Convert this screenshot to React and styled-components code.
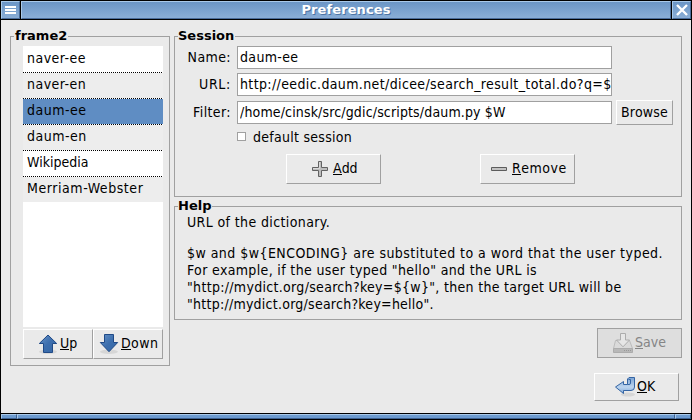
import React from 'react';
import styled, { createGlobalStyle } from 'styled-components';

const GlobalStyle = createGlobalStyle`
  *, *::before, *::after { box-sizing: border-box; }
  body { margin: 0; background: #eaeaea; }
`;

const Window = styled.div`
  width: 692px;
  height: 420px;
  display: flex;
  flex-direction: column;
  overflow: hidden;
  border: 1px solid #000;
  background: #eaeaea;
  color: #000;
  font: 14px/17px "DejaVu Sans Condensed", "DejaVu Sans", sans-serif;
  font-stretch: condensed;
  white-space: nowrap;
`;

const TitleBar = styled.header`
  display: grid;
  grid-template-columns: 19px 1fr 19px;
  column-gap: 1px;
  height: 19px;
  background: #000;
  border-bottom: 1px solid #000;
`;

const TitleCell = styled.div`
  display: flex;
  align-items: center;
  justify-content: center;
  border: 1px solid;
  border-color: #a9c9e9 #4a6c9a #4a6c9a #a9c9e9;
  background: linear-gradient(#6b96c6, #8aaed6);
`;

const Title = styled.h1`
  margin: 0;
  color: #fff;
  font: bold 13px/16px "DejaVu Sans", sans-serif;
  letter-spacing: 0.1px;
  text-shadow: 1px 1px 0 #4c74a4;
`;

const Body = styled.main`
  flex: 1;
  display: grid;
  grid-template-columns: 160px 508px;
  column-gap: 4px;
  align-items: start;
  padding: 16px 9px 0;
`;

const Column = styled.div`
  display: flex;
  flex-direction: column;
  gap: 9px;
`;

const Frame = styled.section`
  position: relative;
  height: ${(p) => p.$height}px;
  border: 1px solid #a0a0a0;
`;

const Legend = styled.h2`
  position: absolute;
  top: -9px;
  left: 3px;
  margin: 0;
  padding: 0 1px 0 ${(p) => p.$inset || 0}px;
  background: #eaeaea;
  font: bold 13px/16px "DejaVu Sans", sans-serif;
`;

const SideContent = styled.div`
  display: flex;
  flex-direction: column;
  padding: 9px 6px 0 12px;
`;

const List = styled.ul`
  height: 281px;
  margin: 0;
  padding: 0;
  list-style: none;
  background: #fff;
`;

const Item = styled.li`
  position: relative;
  height: 26px;
  padding: 4px 4px 0;
  letter-spacing: ${(p) => p.$tracking}px;
  background: ${(p) => (p.$selected ? '#5f8dc3' : p.$shaded ? '#ededed' : '#fff')};

  &:not(:first-child)::before {
    content: "";
    position: absolute;
    top: 0;
    left: 0;
    right: 0;
    height: 1px;
    background: repeating-linear-gradient(90deg, #000 0 1px, #fff 1px 2px);
  }
`;

const PairRow = styled.div`
  display: grid;
  grid-template-columns: 1fr 1fr;
  margin-top: 2px;
`;

const Button = styled.button`
  display: flex;
  align-items: center;
  justify-content: flex-start;
  width: ${(p) => (p.$width ? `${p.$width}px` : 'auto')};
  height: ${(p) => p.$height || 30}px;
  padding: 0 0 1px ${(p) => p.$start || 0}px;
  gap: ${(p) => p.$gap ?? 3}px;
  border: 1px solid;
  border-color: #ffffff #a0a0a0 #a0a0a0 #ffffff;
  background: #eaeaea;
  color: #000;
  font: inherit;
  letter-spacing: ${(p) => p.$tracking || 0}px;

  &:disabled {
    border-color: #a0a0a0;
    background: #dedede;
    color: #858585;
  }

  svg { flex: none; }
`;

const BrowseButton = styled(Button)`
  margin-left: -2px;
`;

const Mnemonic = styled.span`
  display: inline-block;
  border-bottom: 1px solid;
  line-height: 12px;
`;

const Form = styled.div`
  display: grid;
  grid-template-columns: 56px 375px 57px;
  grid-template-rows: 23px 23px 25px;
  column-gap: 6px;
  row-gap: 4px;
  align-items: center;
  padding-top: 9px;
`;

const FieldLabel = styled.label`
  grid-column: 1;
  text-align: right;
  letter-spacing: ${(p) => p.$tracking}px;
`;

const Field = styled.input`
  width: 100%;
  height: 23px;
  margin: 0;
  padding: 0 0 1px 2px;
  border: 1px solid #a0a0a0;
  border-radius: 0;
  outline: none;
  background: #fff;
  color: #000;
  font: inherit;
  letter-spacing: ${(p) => p.$tracking}px;
`;

const CheckRow = styled.label`
  display: flex;
  align-items: flex-end;
  gap: 7px;
  height: 17px;
  margin: 4px 0 0 62px;
  letter-spacing: 0.27px;
`;

const CheckBox = styled.span`
  width: 9px;
  height: 9px;
  margin-bottom: 5px;
  border: 1px solid #a0a0a0;
  background: #fff;
`;

const Actions = styled.div`
  display: flex;
  gap: 99px;
  margin: 8px 0 0 111px;
`;

const HelpText = styled.div`
  display: flex;
  flex-direction: column;
  gap: 14px;
  padding: 7px 0 0 12px;
`;

const HelpLine = styled.div`
  letter-spacing: ${(p) => p.$tracking}px;
`;

const Footer = styled.div`
  display: flex;
  flex-direction: column;
  align-items: flex-end;
  gap: 15px;
  margin-top: -1px;
`;

const ConfirmButton = styled(Button)`
  margin-right: 3px;
`;

const ResizeBar = styled.footer`
  display: grid;
  grid-template-columns: 16px 1fr 16px;
  height: 6px;
  border-top: 1px solid #000;
`;

const ResizeGrip = styled.div`
  border: 1px solid;
  border-color: #a9c9e9 #3c5f8e #3c5f8e #a9c9e9;
  background: #6d9bcf;
`;

const MenuIcon = () => (
  <svg width="11" height="8" shapeRendering="crispEdges" aria-hidden="true">
    <path d="M0 0h11v2H0zM0 3h11v2H0zM0 6h11v2H0z" fill="#fff" />
  </svg>
);

const CloseIcon = () => (
  <svg width="12" height="12" aria-hidden="true">
    <path d="M1 1l10 10M11 1L1 11" stroke="#fff" strokeWidth="2.4" />
  </svg>
);

const ArrowIcon = ({ down }) => (
  <svg width="20" height="21" viewBox="0 0 20 21" aria-hidden="true">
    <defs>
      <linearGradient id={down ? 'arrowDown' : 'arrowUp'} x2="1" y2="1">
        <stop offset="0" stopColor="#6792c7" />
        <stop offset="0.5" stopColor="#3d6fae" />
        <stop offset="1" stopColor="#3465a4" />
      </linearGradient>
    </defs>
    <ellipse cx="10" cy="18.800" rx="9" ry="2.200" fill="#d6d6d6" />
    <path
      d={down
        ? 'M5.500 1.500h9v8h4.200L10 18.700 1.300 9.500h4.200z'
        : 'M10 2l8.700 8.500h-4.200v9h-9v-9H1.300z'}
      fill={`url(#${down ? 'arrowDown' : 'arrowUp'})`}
      stroke="#204a87"
    />
  </svg>
);

const PlusIcon = () => (
  <svg width="16" height="17" viewBox="0 -1 16 17" aria-hidden="true">
    <path d="M6.500 .5h3v6h6v3h-6v6h-3v-6h-6v-3h6z" fill="#bdbdbd" stroke="#626262" />
    <path d="M7.500 1v6.500H1" fill="none" stroke="#dadada" />
  </svg>
);

const MinusIcon = () => (
  <svg width="16" height="5" viewBox="0 -1 16 5" aria-hidden="true">
    <path d="M.5 .5h15v3H.5z" fill="#c2c2c2" stroke="#5c5c5c" />
  </svg>
);

const SaveIcon = () => (
  <svg width="22" height="21" viewBox="0 0 22 21" aria-hidden="true">
    <path d="M3.500 8.500h14l3 8v3.500H1.500v-3.500z" fill="#dadada" stroke="#bcbcbc" />
    <path d="M1.500 16.500h19v4h-19z" fill="#b8b8b8" stroke="#acacac" />
    <path d="M12 18.500h7" stroke="#989898" strokeDasharray="1 1" />
    <path d="M8.500 1.500h5v6.500h4L11 14.800 4.500 8h4z" fill="#e6e6e6" stroke="#acacac" />
  </svg>
);

const ReturnIcon = () => (
  <svg width="22" height="21" viewBox="0 0 22 21" aria-hidden="true">
    <defs>
      <linearGradient id="returnFill" x2="0" y2="1">
        <stop offset="0" stopColor="#7ca4d4" />
        <stop offset=".6" stopColor="#bcd4ee" />
        <stop offset="1" stopColor="#7fa8d8" />
      </linearGradient>
    </defs>
    <ellipse cx="14" cy="18.500" rx="7" ry="2" fill="#d6d6d6" />
    <path
      d="M13.500 3l1.500-1.500h5.500V11q0 3.500-3.500 3.500H9.500V17.500L1.500 11 9.500 5.500V8.500h4z"
      fill="url(#returnFill)"
      stroke="#3465a4"
    />
    <path d="M13.500 8.500h1.500q1.500 0 1.500-1.500V3.500h-2" fill="none" stroke="#3465a4" />
  </svg>
);

const sessions = [
  { name: 'naver-ee', tracking: 0.48 },
  { name: 'naver-en', tracking: 0.48 },
  { name: 'daum-ee', tracking: 0.5 },
  { name: 'daum-en', tracking: 0.5 },
  { name: 'Wikipedia', tracking: 0 },
  { name: 'Merriam-Webster', tracking: 0.56 },
];

const helpLines = [
  { text: '$w and $w{ENCODING} are substituted to a word that the user typed.', tracking: 0.46 },
  { text: 'For example, if the user typed "hello" and the URL is', tracking: 0.35 },
  { text: '"http://mydict.org/search?key=${w}", then the target URL will be', tracking: 0.31 },
  { text: '"http://mydict.org/search?key=hello".', tracking: 0.25 },
];

const Caption = ({ text }) => (
  <span>
    <Mnemonic>{text[0]}</Mnemonic>
    {text.slice(1)}
  </span>
);

export default function App() {
  return (
    <Window>
      <GlobalStyle />
      <TitleBar>
        <TitleCell><MenuIcon /></TitleCell>
        <TitleCell><Title>Preferences</Title></TitleCell>
        <TitleCell><CloseIcon /></TitleCell>
      </TitleBar>

      <Body>
        <Frame $height={330}>
          <Legend $inset={1}>frame2</Legend>
          <SideContent>
            <List>
              {sessions.map(({ name, tracking }, i) => (
                <Item
                  key={name}
                  $tracking={tracking}
                  $shaded={i % 2 === 1}
                  $selected={name === 'daum-ee'}
                >
                  {name}
                </Item>
              ))}
            </List>
            <PairRow>
              <Button $start={14} $gap={2}><ArrowIcon /><Caption text="Up" /></Button>
              <Button $start={5} $gap={2} $tracking={0.4}><ArrowIcon down /><Caption text="Down" /></Button>
            </PairRow>
          </SideContent>
        </Frame>

        <Column>
          <Frame $height={161}>
            <Legend>Session</Legend>
            <Form>
              <FieldLabel htmlFor="name" $tracking={0.4}>Name:</FieldLabel>
              <Field id="name" $tracking={0.35} defaultValue="daum-ee" />
              <FieldLabel htmlFor="url" $tracking={0.7}>URL:</FieldLabel>
              <Field id="url" $tracking={0.375} defaultValue="http://eedic.daum.net/dicee/search_result_total.do?q=$" />
              <FieldLabel htmlFor="filter" $tracking={0.4}>Filter:</FieldLabel>
              <Field id="filter" $tracking={0.15} defaultValue="/home/cinsk/src/gdic/scripts/daum.py $W" />
              <BrowseButton $width={57} $height={25} $start={4} $tracking={0.2}>Browse</BrowseButton>
            </Form>
            <CheckRow><CheckBox />default session</CheckRow>
            <Actions>
              <Button $width={95} $start={25} $gap={5}><PlusIcon /><Caption text="Add" /></Button>
              <Button $width={95} $start={10} $gap={5} $tracking={0.5}><MinusIcon /><Caption text="Remove" /></Button>
            </Actions>
          </Frame>

          <Frame $height={114}>
            <Legend>Help</Legend>
            <HelpText>
              <HelpLine $tracking={0.38}>URL of the dictionary.</HelpLine>
              <div>
                {helpLines.map(({ text, tracking }) => (
                  <HelpLine key={text} $tracking={tracking}>{text}</HelpLine>
                ))}
              </div>
            </HelpText>
          </Frame>

          <Footer>
            <Button disabled $width={85} $start={14} $gap={1}><SaveIcon /><Caption text="Save" /></Button>
            <ConfirmButton $width={85} $height={28} $start={19} $gap={1}><ReturnIcon /><Caption text="OK" /></ConfirmButton>
          </Footer>
        </Column>
      </Body>

      <ResizeBar>
        <ResizeGrip />
        <ResizeGrip />
        <ResizeGrip />
      </ResizeBar>
    </Window>
  );
}
